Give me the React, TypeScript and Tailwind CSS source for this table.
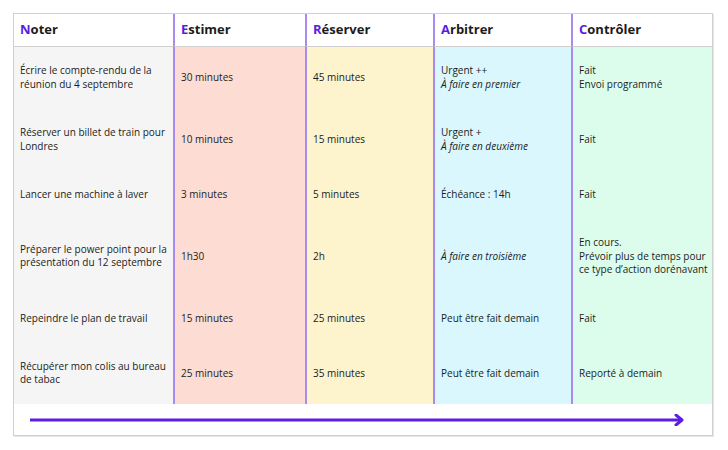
const headers = ["Noter", "Estimer", "Réserver", "Arbitrer", "Contrôler"];

const colBg = ["bg-[#f5f5f5]", "bg-[#fddcd4]", "bg-[#fdf3cd]", "bg-[#d9f7fd]", "bg-[#dcfcec]"];

type Cell = { lines: { text: string; italic?: boolean }[] };

const rows: Cell[][] = [
  [
    { lines: [{ text: "Écrire le compte-rendu de la réunion du 4 septembre" }] },
    { lines: [{ text: "30 minutes" }] },
    { lines: [{ text: "45 minutes" }] },
    { lines: [{ text: "Urgent ++" }, { text: "À faire en premier", italic: true }] },
    { lines: [{ text: "Fait" }, { text: "Envoi programmé" }] },
  ],
  [
    { lines: [{ text: "Réserver un billet de train pour Londres" }] },
    { lines: [{ text: "10 minutes" }] },
    { lines: [{ text: "15 minutes" }] },
    { lines: [{ text: "Urgent +" }, { text: "À faire en deuxième", italic: true }] },
    { lines: [{ text: "Fait" }] },
  ],
  [
    { lines: [{ text: "Lancer une machine à laver" }] },
    { lines: [{ text: "3 minutes" }] },
    { lines: [{ text: "5 minutes" }] },
    { lines: [{ text: "Échéance : 14h" }] },
    { lines: [{ text: "Fait" }] },
  ],
  [
    { lines: [{ text: "Préparer le power point pour la présentation du 12 septembre" }] },
    { lines: [{ text: "1h30" }] },
    { lines: [{ text: "2h" }] },
    { lines: [{ text: "À faire en troisième", italic: true }] },
    { lines: [{ text: "En cours." }, { text: "Prévoir plus de temps pour ce type d’action dorénavant" }] },
  ],
  [
    { lines: [{ text: "Repeindre le plan de travail" }] },
    { lines: [{ text: "15 minutes" }] },
    { lines: [{ text: "25 minutes" }] },
    { lines: [{ text: "Peut être fait demain" }] },
    { lines: [{ text: "Fait" }] },
  ],
  [
    { lines: [{ text: "Récupérer mon colis au bureau de tabac" }] },
    { lines: [{ text: "25 minutes" }] },
    { lines: [{ text: "35 minutes" }] },
    { lines: [{ text: "Peut être fait demain" }] },
    { lines: [{ text: "Reporté à demain" }] },
  ],
];

export default function App() {
  return (
    <div className="h-[450px] w-[728px] bg-white pl-[13px] pt-[13px] font-['Open_Sans',sans-serif] text-[#1c1c1c]">
      <div className="w-[700px] border border-[#d0d0d0] shadow-[1px_1px_0_#e6e6e6]">
        <div className="grid grid-cols-[159px_132px_128px_138px_141px]">
          {headers.map((h, i) => (
            <div
              key={h}
              className={`flex h-[33px] items-center border-b border-[#d0d0d0] bg-white px-[6px] text-[13px] font-bold ${
                i > 0 ? "border-l-2 border-l-[#a98bf0]" : ""
              }`}
            >
              <span className="text-[#5b1de4]">{h[0]}</span>
              {h.slice(1)}
            </div>
          ))}
          {rows.map((row, r) =>
            row.map((cell, c) => (
              <div
                key={`${r}-${c}`}
                className={`flex flex-col justify-center py-[17.4px] pl-[6px] pr-[2px] text-[10px] leading-[13.5px] ${colBg[c]} ${
                  c > 0 ? "border-l-2 border-l-[#a98bf0]" : ""
                }`}
              >
                {cell.lines.map((l, k) => (
                  <div key={k} className={l.italic ? "italic" : ""}>
                    {l.text}
                  </div>
                ))}
              </div>
            ))
          )}
        </div>
        <div className="flex h-[31px] items-center pl-[16px]">
          <svg width="660" height="12" viewBox="0 0 660 12">
            <line x1="0" y1="6" x2="652" y2="6" stroke="#5b1de4" strokeWidth="3" />
            <polyline points="646,1 652,6 646,11" fill="none" stroke="#5b1de4" strokeWidth="3" strokeLinecap="round" strokeLinejoin="round" />
          </svg>
        </div>
      </div>
    </div>
  );
}
